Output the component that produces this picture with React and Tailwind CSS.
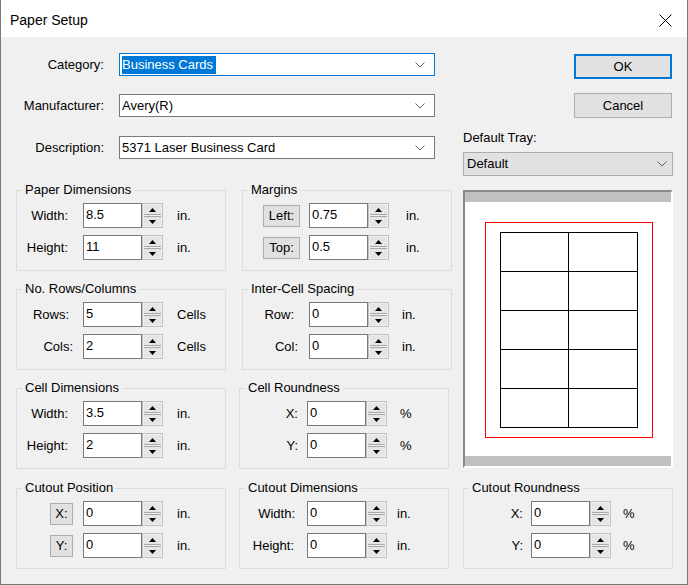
import React from 'react';

const FONT = { fontFamily: '"Liberation Sans", Arial, sans-serif' };

function Chevron({ className = '' }) {
  return (
    <svg width="10" height="6" viewBox="0 0 10 6" className={className}>
      <polyline points="0.5,0.5 5,5 9.5,0.5" fill="none" stroke="#606060" strokeWidth="1" />
    </svg>
  );
}

function Combo({ value, focused }) {
  return (
    <div
      className={`flex h-[23px] w-[316px] items-center border bg-white pl-[2px] pr-[9px] ${
        focused ? 'border-[#0078d7]' : 'border-[#7a7a7a]'
      }`}
    >
      {focused ? (
        <span className="bg-[#0078d7] pr-[3px] leading-[18px] text-white">{value}</span>
      ) : (
        <span className="leading-[18px]">{value}</span>
      )}
      <Chevron className="ml-auto" />
    </div>
  );
}

function FormRow({ label, mt = '', children }) {
  return (
    <div className={`flex items-center ${mt}`}>
      <div className="w-[88px] text-right">{label}</div>
      <div className="ml-[15px]">{children}</div>
    </div>
  );
}

function Arrow({ up }) {
  return (
    <svg width="7" height="4" viewBox="0 0 7 4">
      <polygon points={up ? '3.5,0 7,4 0,4' : '0,0 7,0 3.5,4'} fill="#000" />
    </svg>
  );
}

function Spinner() {
  return (
    <div className="flex h-[25px] w-[21px] flex-col gap-[1px] border border-[#c0c0c0] bg-[#f0f0f0] p-[1px]">
      <div className="flex flex-1 items-center justify-center border-b border-[#a8a8a8] bg-[#e5e5e5]">
        <Arrow up />
      </div>
      <div className="flex flex-1 items-center justify-center border-t border-[#a8a8a8] bg-[#e5e5e5]">
        <Arrow />
      </div>
    </div>
  );
}

function LabelButton({ text, w }) {
  return (
    <div className={`flex h-[22px] items-center justify-center border border-[#adadad] bg-[#e1e1e1] ${w}`}>
      {text}
    </div>
  );
}

// One field row: label box (right aligned) + edit + spinner + unit
function SpinRow({ label, lw, pr, value, unit, ug }) {
  return (
    <div className="flex h-[25px] items-center">
      <div className={`flex justify-end ${lw} ${pr}`}>{label}</div>
      <div className="flex h-[25px] w-[59px] items-center border border-[#7a7a7a] bg-white pb-[1px] pl-[2px] leading-[16px]">
        {value}
      </div>
      <Spinner />
      <div className={ug}>{unit}</div>
    </div>
  );
}

function Group({ title, className = '', children }) {
  return (
    <div className={`relative h-[81px] w-[210px] border border-[#dcdcdc] ${className}`}>
      <span className="absolute left-[5px] top-[-9px] bg-[#f0f0f0] px-[3px] leading-[16px]">{title}</span>
      <div className="flex flex-col gap-[7px] pt-[12px]">{children}</div>
    </div>
  );
}

function Preview() {
  const cells = Array.from({ length: 10 });
  return (
    <div className="mt-[14px] flex h-[278px] w-[210px] flex-col border-2 border-b-white border-l-[#8a8a8a] border-r-white border-t-[#8a8a8a]">
      <div className="h-[10px] bg-[#c0c0c0]" />
      <div className="flex-1 bg-white pl-[20px] pt-[20px]">
        <div className="h-[216px] w-[168px] border border-[#ff0000] pl-[14px] pt-[9px]">
          <div className="grid w-[138px] grid-cols-[68px_69px] grid-rows-[39px_39px_39px_39px_39px] border-l border-t border-black">
            {cells.map((_, i) => (
              <div key={i} className="border-b border-r border-black" />
            ))}
          </div>
        </div>
      </div>
      <div className="h-[10px] bg-[#c0c0c0]" />
    </div>
  );
}

export default function App() {
  return (
    <div
      style={FONT}
      className="flex h-[585px] w-[688px] flex-col border-x border-b border-[#7a7a7a] text-[13px] text-black"
    >
      {/* Title bar */}
      <div className="flex h-[37px] shrink-0 items-center bg-white pl-[9px] pr-[15px] pt-[3px]">
        <span className="text-[14px]">Paper Setup</span>
        <svg width="13" height="13" viewBox="0 0 13 13" className="ml-auto">
          <line x1="0.5" y1="0.5" x2="12.5" y2="12.5" stroke="#000" strokeWidth="1" />
          <line x1="12.5" y1="0.5" x2="0.5" y2="12.5" stroke="#000" strokeWidth="1" />
        </svg>
      </div>

      {/* Body */}
      <div className="flex flex-1 bg-[#f0f0f0] pl-[15px]">
        {/* Left column */}
        <div className="flex w-[436px] flex-col pt-[16px]">
          <FormRow label="Category:">
            <Combo value="Business Cards" focused />
          </FormRow>
          <FormRow label="Manufacturer:" mt="mt-[18px]">
            <Combo value="Avery(R)" />
          </FormRow>
          <FormRow label="Description:" mt="mt-[19px]">
            <Combo value="5371 Laser Business Card" />
          </FormRow>

          <div className="mt-[31px] flex gap-[16px]">
            <Group title="Paper Dimensions">
              <SpinRow label="Width:" lw="w-[66px]" pr="pr-[15px]" value="8.5" unit="in." ug="ml-[14px]" />
              <SpinRow label="Height:" lw="w-[66px]" pr="pr-[15px]" value="11" unit="in." ug="ml-[14px]" />
            </Group>
            <Group title="Margins">
              <SpinRow label={<LabelButton text="Left:" w="w-[37px]" />} lw="w-[66px]" pr="pr-[9px]" value="0.75" unit="in." ug="ml-[17px]" />
              <SpinRow label={<LabelButton text="Top:" w="w-[37px]" />} lw="w-[66px]" pr="pr-[9px]" value="0.5" unit="in." ug="ml-[17px]" />
            </Group>
          </div>

          <div className="mt-[18px] flex gap-[16px]">
            <Group title="No. Rows/Columns">
              <SpinRow label="Rows:" lw="w-[66px]" pr="pr-[14px]" value="5" unit="Cells" ug="ml-[14px]" />
              <SpinRow label="Cols:" lw="w-[66px]" pr="pr-[10px]" value="2" unit="Cells" ug="ml-[14px]" />
            </Group>
            <Group title="Inter-Cell Spacing">
              <SpinRow label="Row:" lw="w-[66px]" pr="pr-[15px]" value="0" unit="in." ug="ml-[13px]" />
              <SpinRow label="Col:" lw="w-[66px]" pr="pr-[11px]" value="0" unit="in." ug="ml-[13px]" />
            </Group>
          </div>

          <div className="mt-[18px] flex gap-[13px]">
            <Group title="Cell Dimensions">
              <SpinRow label="Width:" lw="w-[66px]" pr="pr-[15px]" value="3.5" unit="in." ug="ml-[14px]" />
              <SpinRow label="Height:" lw="w-[66px]" pr="pr-[15px]" value="2" unit="in." ug="ml-[14px]" />
            </Group>
            <Group title="Cell Roundness">
              <SpinRow label="X:" lw="w-[67px]" pr="pr-[9px]" value="0" unit="%" ug="ml-[13px]" />
              <SpinRow label="Y:" lw="w-[67px]" pr="pr-[9px]" value="0" unit="%" ug="ml-[13px]" />
            </Group>
          </div>

          <div className="mt-[19px] flex gap-[13px]">
            <Group title="Cutout Position">
              <SpinRow label={<LabelButton text="X:" w="w-[23px]" />} lw="w-[66px]" pr="pr-[10px]" value="0" unit="in." ug="ml-[14px]" />
              <SpinRow label={<LabelButton text="Y:" w="w-[23px]" />} lw="w-[66px]" pr="pr-[10px]" value="0" unit="in." ug="ml-[14px]" />
            </Group>
            <Group title="Cutout Dimensions">
              <SpinRow label="Width:" lw="w-[67px]" pr="pr-[12px]" value="0" unit="in." ug="ml-[10px]" />
              <SpinRow label="Height:" lw="w-[67px]" pr="pr-[13px]" value="0" unit="in." ug="ml-[10px]" />
            </Group>
          </div>
        </div>

        {/* Right column */}
        <div className="ml-[11px] flex w-[210px] flex-col pt-[17px]">
          <button className="ml-[111px] h-[25px] w-[98px] border-2 border-[#0078d7] bg-[#e1e1e1]">OK</button>
          <button className="ml-[111px] mt-[14px] h-[25px] w-[98px] border border-[#adadad] bg-[#e1e1e1]">Cancel</button>
          <div className="mt-[12px] leading-[16px]">Default Tray:</div>
          <div className="mt-[6px] flex h-[24px] items-center border border-[#adadad] bg-[#e1e1e1] pl-[3px] pr-[5px]">
            <span>Default</span>
            <Chevron className="ml-auto" />
          </div>
          <Preview />
          <Group title="Cutout Roundness" className="mt-[20px]">
            <SpinRow label="X:" lw="w-[67px]" pr="pr-[8px]" value="0" unit="%" ug="ml-[12px]" />
            <SpinRow label="Y:" lw="w-[67px]" pr="pr-[8px]" value="0" unit="%" ug="ml-[12px]" />
          </Group>
        </div>
      </div>
    </div>
  );
}
